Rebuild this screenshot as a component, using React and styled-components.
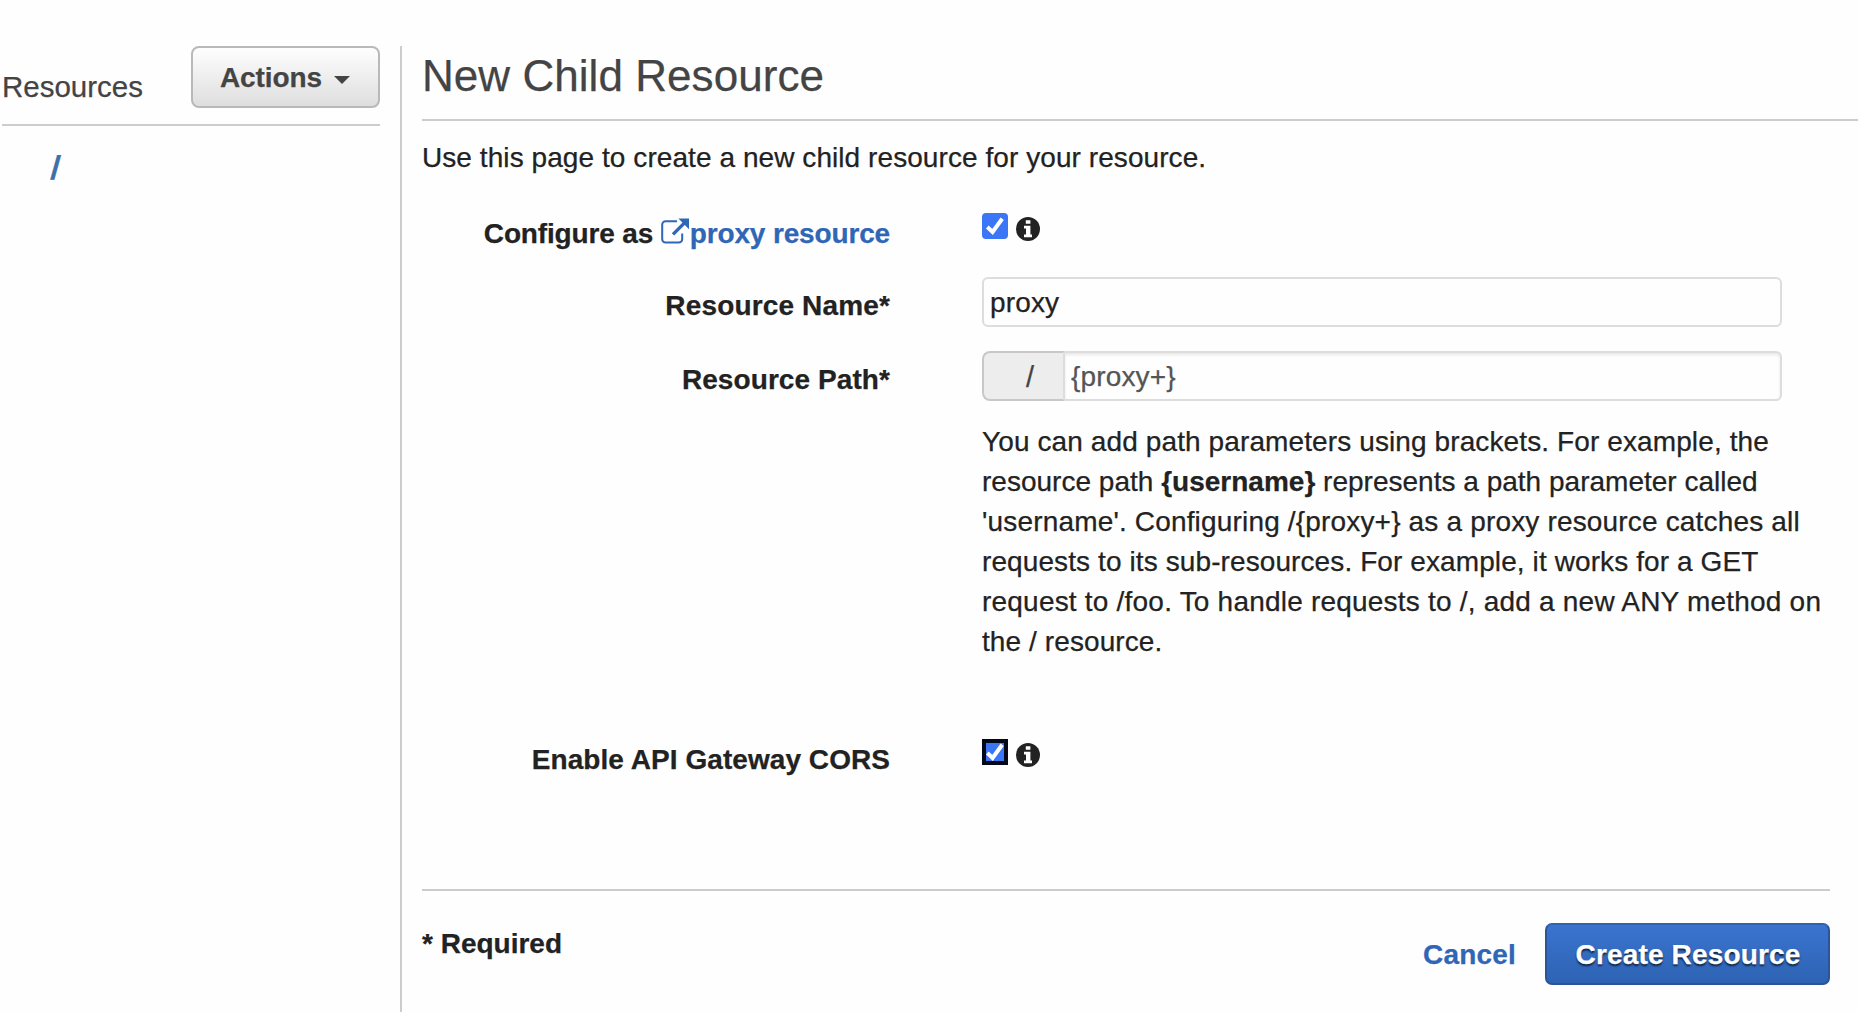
import React from 'react';
import styled, { createGlobalStyle } from 'styled-components';

const GlobalStyle = createGlobalStyle`
  * { box-sizing: border-box; }
  body {
    margin: 0;
    background: #fefefe;
    color: #222;
    font-family: "Liberation Sans", Arial, sans-serif;
    font-size: 28px;
    line-height: 40px;
    -webkit-text-stroke: 0.25px;
  }
`;

const Page = styled.div`
  display: flex;
  height: 1012px;
  padding-top: 46px;
  overflow: hidden;
`;

const Sidebar = styled.aside`
  width: 400px;
  flex: none;
  padding: 0 20px 0 2px;
`;

const SidebarHeader = styled.div`
  display: flex;
  justify-content: space-between;
  height: 80px;
  border-bottom: 2px solid #ccc;
`;

const SidebarTitle = styled.div`
  margin: 21px 0 0 0;
  color: #444;
  font-size: 29.5px;
`;

const ActionsButton = styled.button`
  display: flex;
  align-items: center;
  width: 189px;
  height: 62px;
  padding: 2px 0 0 27px;
  border: 2px solid #b9b9b9;
  border-radius: 8px;
  background: linear-gradient(#fefefe, #dedede);
  color: #444;
  font: 700 28px/58px "Liberation Sans", Arial, sans-serif;
  letter-spacing: -0.1px;
`;

const Caret = styled.span`
  margin: 3px 0 0 12px;
  border: 8px solid transparent;
  border-top-color: #444;
  border-bottom: 0;
`;

const RootPath = styled.a`
  display: block;
  margin: 22px 0 0 49px;
  color: #416fa9;
  font-size: 33px;
  font-weight: 700;
  transform: skewX(-5deg);
`;

const Main = styled.main`
  flex: 1;
  min-width: 0;
  border-left: 2px solid #ccc;
  padding-left: 20px;
`;

const Heading = styled.h1`
  margin: 0;
  padding-bottom: 13px;
  border-bottom: 2px solid #ccc;
  color: #444;
  font-size: 44px;
  font-weight: 400;
  line-height: 60px;
  letter-spacing: 0.05px;
`;

const Intro = styled.p`
  margin: 0;
  padding: 17px 0 0;
  height: 56px;
  letter-spacing: 0.07px;
`;

const FormRow = styled.div`
  display: grid;
  grid-template-columns: 468px 1fr;
  column-gap: 92px;
  height: ${(p) => p.$height}px;
  padding-top: ${(p) => p.$top || 0}px;
`;

const Label = styled.label`
  padding-top: ${(p) => p.$offset || 0}px;
  text-align: right;
  font-weight: 700;
  white-space: nowrap;
  letter-spacing: ${(p) => p.$tracking || 0}px;
`;

const Link = styled.a`
  color: #2f66b5;
`;

const LinkIcon = styled.svg`
  width: 28px;
  height: 26px;
  margin-right: 1px;
  vertical-align: -1px;
`;

const Choice = styled.div`
  display: flex;
  align-items: flex-start;
  gap: 8px;
`;

const CheckBox = styled.span`
  display: grid;
  width: 26px;
  height: 26px;
  border-radius: ${(p) => (p.$focused ? 0 : 4)}px;
  border: ${(p) => (p.$focused ? '4px solid #020817' : '0')};
  background: #3b76f6;
  place-items: center;
`;

const CheckMark = styled.svg`
  width: 18px;
  height: 18px;
`;

const InfoIcon = styled.svg`
  width: 24px;
  height: 24px;
  margin-top: 4px;
`;

const TextInput = styled.input`
  display: block;
  width: ${(p) => p.$width}px;
  height: 50px;
  padding: ${(p) => (p.$joined ? '2px 0 0 6px' : '2px 0 0 6px')};
  border: 2px solid #ddd;
  border-left-width: ${(p) => (p.$joined ? 0 : 2)}px;
  border-radius: ${(p) => (p.$joined ? '0 6px 6px 0' : '6px')};
  outline: 0;
  background: #fefefe;
  box-shadow: ${(p) => (p.$joined ? 'inset 0 2px 3px rgba(0, 0, 0, 0.09)' : 'none')};
  color: ${(p) => (p.$joined ? '#555' : '#222')};
  font: 28px "Liberation Sans", Arial, sans-serif;
  letter-spacing: 0.15px;
`;

const InputGroup = styled.div`
  display: flex;
`;

const Addon = styled.span`
  width: 83px;
  height: 50px;
  padding: 2px 0 0 42px;
  border: 2px solid #c8c8c8;
  border-right-color: #ddd;
  border-radius: 8px 0 0 8px;
  background: #ededed;
  color: #444;
  font-size: 29px;
  line-height: 44px;
`;

const Help = styled.p`
  margin: 21px 0 0;
  white-space: nowrap;
`;

const HelpLine = styled.span`
  display: block;
  letter-spacing: ${(p) => p.$tracking}px;
`;

const Footer = styled.footer`
  display: flex;
  align-items: flex-start;
  margin-right: 28px;
  padding-top: 32px;
  border-top: 2px solid #ccc;
`;

const RequiredNote = styled.strong`
  flex: 1;
  margin-top: 1px;
`;

const CancelLink = styled.a`
  margin: 12px 29px 0 0;
  color: #2f66b5;
  font-weight: 700;
  letter-spacing: 0.2px;
`;

const SubmitButton = styled.button`
  width: 285px;
  height: 62px;
  padding: 2px 0 0 1px;
  border: 2px solid #2a5596;
  border-top-color: #2f62b0;
  border-radius: 7px;
  background: linear-gradient(#3a74d0, #2e63b3);
  color: #fff;
  font: 700 28px "Liberation Sans", Arial, sans-serif;
  letter-spacing: 0.15px;
  text-shadow: 0 2px 2px rgba(0, 0, 0, 0.7);
`;

function Check({ focused }) {
  return (
    <CheckBox $focused={focused}>
      <CheckMark viewBox="0 0 18 18">
        <path d="M1.3 10 L6.6 15 L16.2 1.8" fill="none" stroke="#fff" strokeWidth="4" />
      </CheckMark>
    </CheckBox>
  );
}

function Info() {
  return (
    <InfoIcon viewBox="0 0 24 24">
      <circle cx="12" cy="12" r="12" fill="#222" />
      <path d="M9.8 3.2h4.6v3.6H9.8zM8 8.8h6.4v8.6H16v2.8H8v-2.8h2v-5.8H8z" fill="#fff" />
    </InfoIcon>
  );
}

function ExternalIcon() {
  return (
    <LinkIcon viewBox="0 0 28 26">
      <path
        d="M16 3.2H4.6A3.4 3.4 0 0 0 1.2 6.6v14.6a3.4 3.4 0 0 0 3.4 3.4h13.2a3.4 3.4 0 0 0 3.4-3.4v-5.6"
        fill="none"
        stroke="#2f66b5"
        strokeWidth="2"
      />
      <path d="M12 16.4 L24 4.4" fill="none" stroke="#2f66b5" strokeWidth="3.4" />
      <path d="M17.4 0.6H28v10.6z" fill="#2f66b5" />
    </LinkIcon>
  );
}

export default function App() {
  return (
    <Page>
      <GlobalStyle />
      <Sidebar>
        <SidebarHeader>
          <SidebarTitle>Resources</SidebarTitle>
          <ActionsButton>
            Actions
            <Caret />
          </ActionsButton>
        </SidebarHeader>
        <RootPath>/</RootPath>
      </Sidebar>
      <Main>
        <Heading>New Child Resource</Heading>
        <Intro>Use this page to create a new child resource for your resource.</Intro>

        <FormRow $height={100} $top={36}>
          <Label $offset={1} $tracking={-0.15}>
            Configure as <Link><ExternalIcon />proxy resource</Link>
          </Label>
          <Choice>
            <Check />
            <Info />
          </Choice>
        </FormRow>

        <FormRow $height={74}>
          <Label $offset={9} $tracking={0.15}>Resource Name*</Label>
          <TextInput $width={800} value="proxy" readOnly />
        </FormRow>

        <FormRow $height={310}>
          <Label $offset={9} $tracking={0.08}>Resource Path*</Label>
          <div>
            <InputGroup>
              <Addon>/</Addon>
              <TextInput $joined $width={717} value="{proxy+}" readOnly />
            </InputGroup>
            <Help>
              <HelpLine $tracking={0.11}>You can add path parameters using brackets. For example, the</HelpLine>
              <HelpLine $tracking={0.01}>
                resource path <b>{'{username}'}</b> represents a path parameter called
              </HelpLine>
              <HelpLine $tracking={0.17}>
                {"'username'. Configuring /{proxy+} as a proxy resource catches all"}
              </HelpLine>
              <HelpLine $tracking={0.1}>requests to its sub-resources. For example, it works for a GET</HelpLine>
              <HelpLine $tracking={0.21}>request to /foo. To handle requests to /, add a new ANY method on</HelpLine>
              <HelpLine $tracking={0.09}>the / resource.</HelpLine>
            </Help>
          </div>
        </FormRow>

        <FormRow $height={228} $top={78}>
          <Label $offset={1} $tracking={0.06}>Enable API Gateway CORS</Label>
          <Choice>
            <Check focused />
            <Info />
          </Choice>
        </FormRow>

        <Footer>
          <RequiredNote>* Required</RequiredNote>
          <CancelLink>Cancel</CancelLink>
          <SubmitButton>Create Resource</SubmitButton>
        </Footer>
      </Main>
    </Page>
  );
}
